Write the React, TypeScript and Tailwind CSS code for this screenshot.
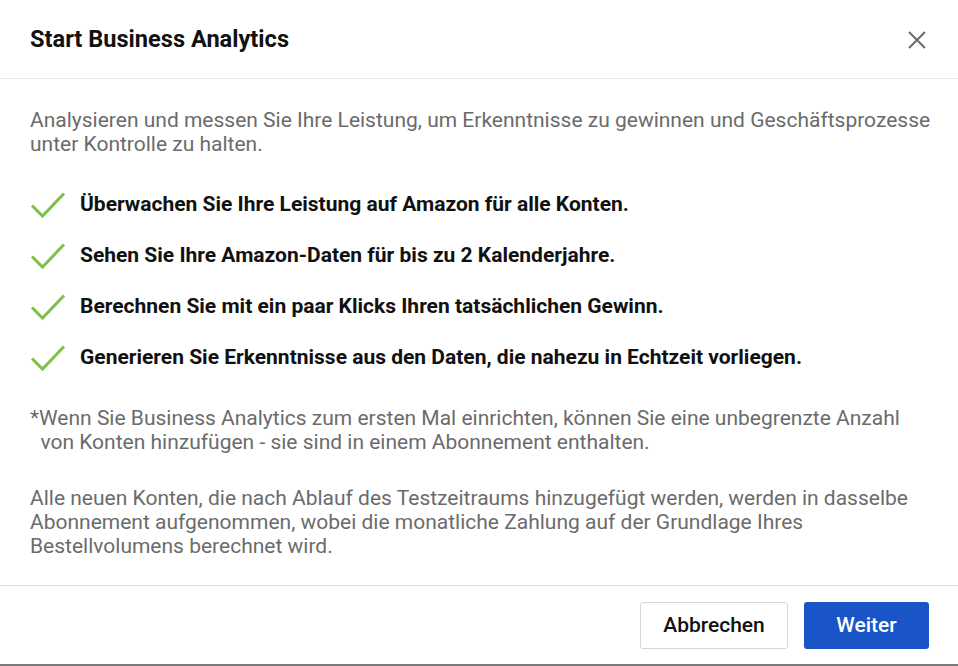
import React from "react";

const items = [
  "Überwachen Sie Ihre Leistung auf Amazon für alle Konten.",
  "Sehen Sie Ihre Amazon-Daten für bis zu 2 Kalenderjahre.",
  "Berechnen Sie mit ein paar Klicks Ihren tatsächlichen Gewinn.",
  "Generieren Sie Erkenntnisse aus den Daten, die nahezu in Echtzeit vorliegen.",
];

function Check() {
  return (
    <svg width="36" height="28" viewBox="0 0 36 28" className="shrink-0">
      <path d="M2 14.5 L12.5 25 L34 2.5" fill="none" stroke="#7cc24a" strokeWidth="3" />
    </svg>
  );
}

export default function App() {
  return (
    <div className="w-[958px] h-[666px] bg-white flex flex-col border-b-2 border-[#7a7a7a] font-['Roboto',sans-serif] overflow-hidden">
      <div className="h-[79px] shrink-0 flex items-center justify-between pl-[30px] pr-[32px] border-b border-[#e6e6e6]">
        <h1 className="text-[23.6px] font-bold text-[#111] mt-[2px]">Start Business Analytics</h1>
        <svg width="18" height="18" viewBox="0 0 18 18" className="mt-[2px]">
          <path d="M1 1 L17 17 M17 1 L1 17" stroke="#6b6b6b" strokeWidth="2" />
        </svg>
      </div>
      <div className="flex-1 flex flex-col px-[30px] pt-[29px]">
        <p className="text-[21px] leading-[24px] text-[#6b6b6b] whitespace-pre-line mr-[-14px]">
          {"Analysieren und messen Sie Ihre Leistung, um Erkenntnisse zu gewinnen und Geschäftsprozesse\nunter Kontrolle zu halten."}
        </p>
        <div className="flex flex-col gap-[23px] mt-[35px]">
          {items.map((t) => (
            <div key={t} className="flex items-center gap-[14px] h-[28px]">
              <Check />
              <span className="text-[21px] font-bold text-[#111]">{t}</span>
            </div>
          ))}
        </div>
        <p className="text-[21px] leading-[24px] text-[#6b6b6b] mt-[34px] whitespace-pre-line">
          {"*Wenn Sie Business Analytics zum ersten Mal einrichten, können Sie eine unbegrenzte Anzahl\n\u00a0 von Konten hinzufügen - sie sind in einem Abonnement enthalten."}
        </p>
        <p className="text-[21px] leading-[24px] text-[#6b6b6b] mt-[32px]">
          Alle neuen Konten, die nach Ablauf des Testzeitraums hinzugefügt werden, werden in dasselbe Abonnement aufgenommen, wobei die monatliche Zahlung auf der Grundlage Ihres Bestellvolumens berechnet wird.
        </p>
      </div>
      <div className="h-[79px] shrink-0 border-t border-[#dcdcdc] flex items-start justify-end gap-[16px] pr-[29px] pt-[16px]">
        <button className="w-[148px] h-[47px] rounded-[3px] border border-[#d6d6d6] bg-white text-[21px] font-medium text-[#111]">
          Abbrechen
        </button>
        <button className="w-[125px] h-[47px] rounded-[3px] bg-[#1a55c8] text-[21px] font-medium text-white">
          Weiter
        </button>
      </div>
    </div>
  );
}
